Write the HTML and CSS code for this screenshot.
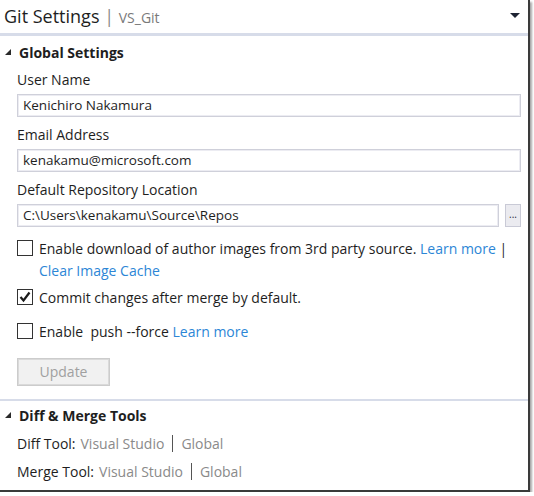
FILE: index.html
```html
<!DOCTYPE html>
<html>
<head>
<meta charset="utf-8">
<link rel="stylesheet" href="styles.css">
</head>
<body>
<div class="panel">
  <div class="titlebar">
    <div class="title">Git Settings <span class="sep">|</span> <span class="repo">VS_Git</span></div>
    <svg class="dropdown" width="10" height="6" viewBox="0 0 10 6"><path d="M0 0 L10 0 L5 5 Z" fill="#1e2433"/></svg>
  </div>
  <div class="section">
    <div class="section-head first-head">
      <svg class="tri" width="8" height="8" viewBox="0 0 8 8"><path d="M7 1 L7 7 L1 7 Z" fill="#2a2a2a"/></svg>
      <span>Global Settings</span>
    </div>
    <div class="body">
      <label class="lbl">User Name</label>
      <div class="input">Kenichiro Nakamura</div>
      <label class="lbl">Email Address</label>
      <div class="input">kenakamu@microsoft.com</div>
      <label class="lbl">Default Repository Location</label>
      <div class="path-row">
        <div class="input grow">C:\Users\kenakamu\Source\Repos</div>
        <div class="browse">...</div>
      </div>
      <div class="check-row c1">
        <span class="box"></span>
        <div class="check-text">Enable download of author images from 3rd party source. <a class="link">Learn more</a> <span class="bar">|</span><br><a class="link">Clear Image Cache</a></div>
      </div>
      <div class="check-row c2">
        <span class="box checked"><svg width="14" height="14" viewBox="0 0 14 14"><path d="M2.5 7 L5.5 10.5 L11.5 2.5" fill="none" stroke="#1a1a1a" stroke-width="2.2"/></svg></span>
        <div class="check-text">Commit changes after merge by default.</div>
      </div>
      <div class="check-row c3">
        <span class="box"></span>
        <div class="check-text">Enable&nbsp; push --force <a class="link">Learn more</a></div>
      </div>
      <div class="btn">Update</div>
    </div>
  </div>
  <div class="section second">
    <div class="section-head">
      <svg class="tri" width="8" height="8" viewBox="0 0 8 8"><path d="M7 1 L7 7 L1 7 Z" fill="#2a2a2a"/></svg>
      <span>Diff &amp; Merge Tools</span>
    </div>
    <div class="body">
      <div class="tool-row">Diff Tool: <span class="opt">Visual Studio</span><span class="vbar"></span><span class="opt">Global</span></div>
      <div class="tool-row">Merge Tool: <span class="opt">Visual Studio</span><span class="vbar"></span><span class="opt">Global</span></div>
    </div>
  </div>
</div>
</body>
</html>
```

FILE: styles.css
```css
html, body {
  margin: 0;
  padding: 0;
  background: #ffffff;
}
body {
  font-family: "Open Sans", "Noto Sans", sans-serif;
  font-size: 14px;
  color: #1e1e1e;
}
.panel {
  width: 528px;
  height: 490px;
  background: #ffffff;
  border-right: 2px solid #3a3a3a;
  border-bottom: 2px solid #3a3a3a;
  box-shadow: 2px 2px 2px rgba(0,0,0,0.35);
  box-sizing: content-box;
}
.titlebar {
  display: flex;
  align-items: center;
  justify-content: space-between;
  height: 33px;
  padding: 0 8px 0 4px;
  border-bottom: 3px solid #d7dce9;
}
.title {
  font-size: 18px;
  color: #1e1e1e;
  margin-top: -1px;
}
.title .sep {
  color: #8a8a8a;
  font-size: 18px;
}
.title .repo {
  color: #7a7a7a;
  font-size: 14px;
}
.dropdown {
  margin-top: -2px;
}
.section-head {
  display: flex;
  align-items: center;
  height: 28px;
  font-weight: 700;
  font-size: 14px;
  padding-left: 4px;
}
.section-head.first-head {
  height: 32px;
}
.section-head .tri {
  margin-right: 7px;
}
.body {
  padding: 0 7px 0 17px;
  display: flex;
  flex-direction: column;
}
.lbl {
  display: block;
  height: 26px;
  line-height: 24px;
}
.input {
  height: 21px;
  line-height: 21px;
  border: 1px solid #cfd0da;
  box-shadow: inset 0 0 0 1px #ececf2;
  padding-left: 5px;
  margin-bottom: 6px;
  font-size: 13.5px;
}
.path-row {
  display: flex;
  gap: 6px;
}
.path-row .input {
  margin-bottom: 0;
}
.grow {
  flex: 1;
}
.browse {
  width: 14px;
  height: 21px;
  border: 1px solid #c9cad6;
  background: #ebebf0;
  color: #2a2a3a;
  font-size: 10px;
  line-height: 19px;
  text-align: center;
}
.check-row {
  display: flex;
  align-items: flex-start;
}
.check-row.c1 {
  margin-top: 11px;
}
.check-row.c2 {
  margin-top: 5px;
}
.check-row.c3 {
  margin-top: 12px;
}
.box {
  width: 14px;
  height: 14px;
  border: 1px solid #333333;
  margin-right: 6px;
  margin-top: 2px;
  flex: none;
  display: flex;
  align-items: center;
  justify-content: center;
}
.check-text {
  line-height: 22px;
}
.link {
  color: #2c86d6;
}
.bar {
  color: #1e1e1e;
}
.btn {
  width: 91px;
  height: 26px;
  margin-top: 15px;
  border: 1px solid #cccccc;
  box-shadow: inset 0 0 0 1px #dadada;
  background: #f1f1f1;
  color: #a0a0a0;
  text-align: center;
  line-height: 26px;
}
.second {
  margin-top: 13px;
  border-top: 2px solid #d7dce9;
}
.tool-row {
  display: flex;
  align-items: center;
  height: 28px;
}
.opt {
  color: #8a8a8a;
  margin-left: 5px;
}
.vbar {
  width: 1px;
  height: 17px;
  background: #555555;
  margin: 0 3px 0 8px;
}
```
